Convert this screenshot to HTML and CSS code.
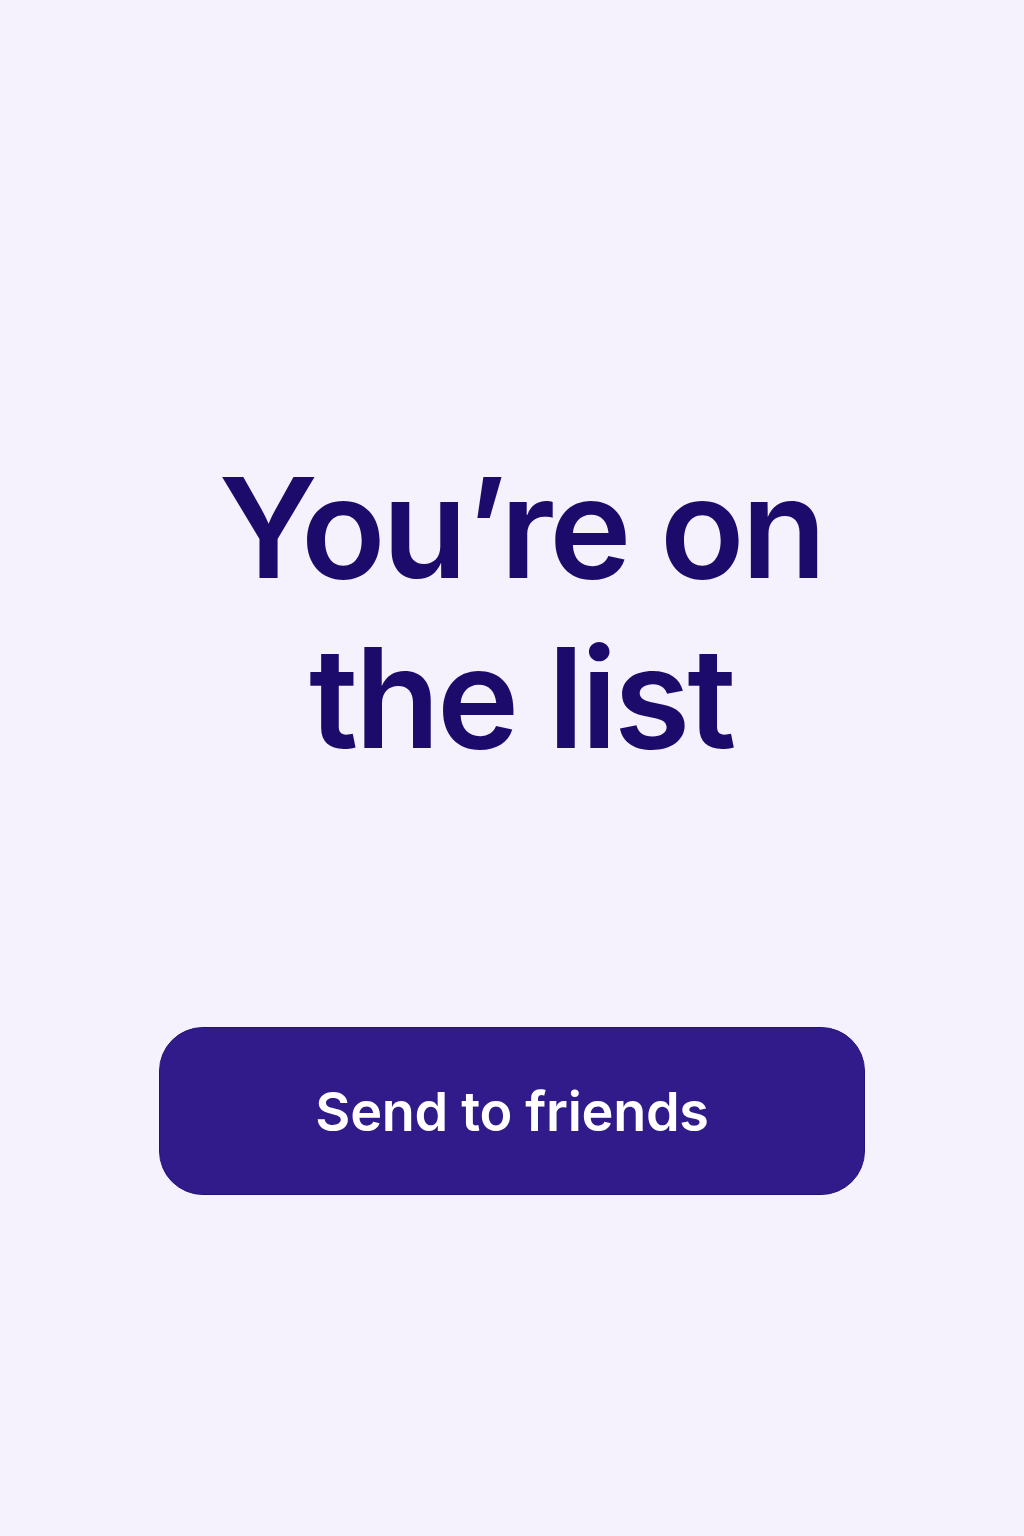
FILE: index.html
```html
<!DOCTYPE html>
<html lang="en">
<head>
<meta charset="utf-8">
<title>You’re on the list</title>
<link rel="stylesheet" href="styles.css">
</head>
<body>
<main class="page">
  <h1 class="title">You’re on<br>the list</h1>
  <button class="cta" type="button">Send to friends</button>
</main>
</body>
</html>
```

FILE: styles.css
```css
html, body {
  margin: 0;
  padding: 0;
}
body {
  background: #f5f2fd;
  font-family: Inter, "Noto Sans", "Liberation Sans", sans-serif;
}
.page {
  min-height: 1536px;
  display: flex;
  flex-direction: column;
  align-items: center;
  box-sizing: border-box;
  padding-top: 443px;
}
.title {
  margin: 0;
  padding-left: 18px;
  font-size: 139px;
  line-height: 170px;
  font-weight: 600;
  letter-spacing: -3.2px;
  color: #1d0b6c;
  text-align: center;
}
.cta {
  margin-top: 244px;
  width: 706px;
  height: 168px;
  border: 1.5px solid #24127a;
  border-radius: 44px;
  background: #311b8a;
  color: #ffffff;
  font-family: Inter, "Noto Sans", "Liberation Sans", sans-serif;
  font-size: 54px;
  font-weight: 600;
  letter-spacing: -0.3px;
  cursor: pointer;
}
```
